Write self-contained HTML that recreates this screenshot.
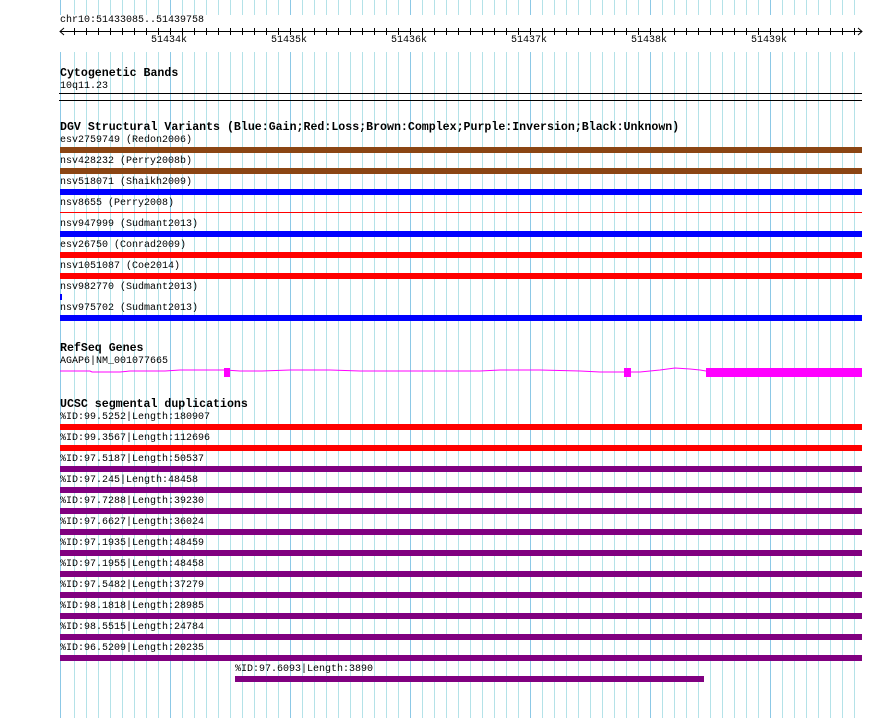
<!DOCTYPE html>
<html><head><style>
body{margin:0;width:890px;height:718px;background:#fff;position:relative;overflow:hidden;font-family:"Liberation Mono",monospace;}
.t{position:absolute;font-size:10px;line-height:11px;color:#000;white-space:nowrap;}
.h{position:absolute;font-size:11.6px;line-height:12px;font-weight:bold;color:#000;white-space:nowrap;}
.b{position:absolute;height:6px;left:60px;width:802px;}
</style></head><body>
<svg width="890" height="718" style="position:absolute;left:0;top:0">
<g id="grid"></g>
<line x1="60.5" y1="0" x2="60.5" y2="718" stroke="#9fd0ea"/>
<script>
</script>
</svg>
<svg width="890" height="718" style="position:absolute;left:0;top:0">
<g stroke="#b4e2e8" stroke-width="1">
<line x1="74.5" y1="0" x2="74.5" y2="718"/><line x1="86.5" y1="0" x2="86.5" y2="718"/><line x1="98.5" y1="0" x2="98.5" y2="718"/><line x1="110.5" y1="0" x2="110.5" y2="718"/><line x1="122.5" y1="0" x2="122.5" y2="718"/><line x1="134.5" y1="0" x2="134.5" y2="718"/><line x1="146.5" y1="0" x2="146.5" y2="718"/><line x1="158.5" y1="0" x2="158.5" y2="718"/>
<line x1="182.5" y1="0" x2="182.5" y2="718"/><line x1="194.5" y1="0" x2="194.5" y2="718"/><line x1="206.5" y1="0" x2="206.5" y2="718"/><line x1="218.5" y1="0" x2="218.5" y2="718"/><line x1="230.5" y1="0" x2="230.5" y2="718"/><line x1="242.5" y1="0" x2="242.5" y2="718"/><line x1="254.5" y1="0" x2="254.5" y2="718"/><line x1="266.5" y1="0" x2="266.5" y2="718"/><line x1="278.5" y1="0" x2="278.5" y2="718"/>
<line x1="302.5" y1="0" x2="302.5" y2="718"/><line x1="314.5" y1="0" x2="314.5" y2="718"/><line x1="326.5" y1="0" x2="326.5" y2="718"/><line x1="338.5" y1="0" x2="338.5" y2="718"/><line x1="350.5" y1="0" x2="350.5" y2="718"/><line x1="362.5" y1="0" x2="362.5" y2="718"/><line x1="374.5" y1="0" x2="374.5" y2="718"/><line x1="386.5" y1="0" x2="386.5" y2="718"/><line x1="398.5" y1="0" x2="398.5" y2="718"/>
<line x1="422.5" y1="0" x2="422.5" y2="718"/><line x1="434.5" y1="0" x2="434.5" y2="718"/><line x1="446.5" y1="0" x2="446.5" y2="718"/><line x1="458.5" y1="0" x2="458.5" y2="718"/><line x1="470.5" y1="0" x2="470.5" y2="718"/><line x1="482.5" y1="0" x2="482.5" y2="718"/><line x1="494.5" y1="0" x2="494.5" y2="718"/><line x1="506.5" y1="0" x2="506.5" y2="718"/><line x1="518.5" y1="0" x2="518.5" y2="718"/>
<line x1="542.5" y1="0" x2="542.5" y2="718"/><line x1="554.5" y1="0" x2="554.5" y2="718"/><line x1="566.5" y1="0" x2="566.5" y2="718"/><line x1="578.5" y1="0" x2="578.5" y2="718"/><line x1="590.5" y1="0" x2="590.5" y2="718"/><line x1="602.5" y1="0" x2="602.5" y2="718"/><line x1="614.5" y1="0" x2="614.5" y2="718"/><line x1="626.5" y1="0" x2="626.5" y2="718"/><line x1="638.5" y1="0" x2="638.5" y2="718"/>
<line x1="662.5" y1="0" x2="662.5" y2="718"/><line x1="674.5" y1="0" x2="674.5" y2="718"/><line x1="686.5" y1="0" x2="686.5" y2="718"/><line x1="698.5" y1="0" x2="698.5" y2="718"/><line x1="710.5" y1="0" x2="710.5" y2="718"/><line x1="722.5" y1="0" x2="722.5" y2="718"/><line x1="734.5" y1="0" x2="734.5" y2="718"/><line x1="746.5" y1="0" x2="746.5" y2="718"/><line x1="758.5" y1="0" x2="758.5" y2="718"/>
<line x1="782.5" y1="0" x2="782.5" y2="718"/><line x1="794.5" y1="0" x2="794.5" y2="718"/><line x1="806.5" y1="0" x2="806.5" y2="718"/><line x1="818.5" y1="0" x2="818.5" y2="718"/><line x1="830.5" y1="0" x2="830.5" y2="718"/><line x1="842.5" y1="0" x2="842.5" y2="718"/><line x1="854.5" y1="0" x2="854.5" y2="718"/>
</g>
<g stroke="#8cc8e6" stroke-width="1">
<line x1="60.5" y1="0" x2="60.5" y2="718"/>
<line x1="170.5" y1="0" x2="170.5" y2="718"/><line x1="290.5" y1="0" x2="290.5" y2="718"/><line x1="410.5" y1="0" x2="410.5" y2="718"/><line x1="530.5" y1="0" x2="530.5" y2="718"/><line x1="650.5" y1="0" x2="650.5" y2="718"/><line x1="770.5" y1="0" x2="770.5" y2="718"/>
</g>
<rect x="0" y="15" width="890" height="37" fill="#fff"/>
<rect x="0" y="62" width="890" height="35" fill="#fff" opacity="0"/>
<!-- axis -->
<g stroke="#000" stroke-width="1">
<line x1="60" y1="31.5" x2="862" y2="31.5"/>
<path d="M64 28 L60 31.5 L64 35 M858 28 L862 31.5 L858 35" fill="none"/>
<line x1="74.5" y1="28" x2="74.5" y2="35"/><line x1="86.5" y1="28" x2="86.5" y2="35"/><line x1="98.5" y1="28" x2="98.5" y2="35"/><line x1="110.5" y1="28" x2="110.5" y2="35"/><line x1="122.5" y1="28" x2="122.5" y2="35"/><line x1="134.5" y1="28" x2="134.5" y2="35"/><line x1="146.5" y1="28" x2="146.5" y2="35"/><line x1="158.5" y1="28" x2="158.5" y2="35"/><line x1="170.5" y1="28" x2="170.5" y2="35"/>
<line x1="182.5" y1="28" x2="182.5" y2="35"/><line x1="194.5" y1="28" x2="194.5" y2="35"/><line x1="206.5" y1="28" x2="206.5" y2="35"/><line x1="218.5" y1="28" x2="218.5" y2="35"/><line x1="230.5" y1="28" x2="230.5" y2="35"/><line x1="242.5" y1="28" x2="242.5" y2="35"/><line x1="254.5" y1="28" x2="254.5" y2="35"/><line x1="266.5" y1="28" x2="266.5" y2="35"/><line x1="278.5" y1="28" x2="278.5" y2="35"/><line x1="290.5" y1="28" x2="290.5" y2="35"/>
<line x1="302.5" y1="28" x2="302.5" y2="35"/><line x1="314.5" y1="28" x2="314.5" y2="35"/><line x1="326.5" y1="28" x2="326.5" y2="35"/><line x1="338.5" y1="28" x2="338.5" y2="35"/><line x1="350.5" y1="28" x2="350.5" y2="35"/><line x1="362.5" y1="28" x2="362.5" y2="35"/><line x1="374.5" y1="28" x2="374.5" y2="35"/><line x1="386.5" y1="28" x2="386.5" y2="35"/><line x1="398.5" y1="28" x2="398.5" y2="35"/><line x1="410.5" y1="28" x2="410.5" y2="35"/>
<line x1="422.5" y1="28" x2="422.5" y2="35"/><line x1="434.5" y1="28" x2="434.5" y2="35"/><line x1="446.5" y1="28" x2="446.5" y2="35"/><line x1="458.5" y1="28" x2="458.5" y2="35"/><line x1="470.5" y1="28" x2="470.5" y2="35"/><line x1="482.5" y1="28" x2="482.5" y2="35"/><line x1="494.5" y1="28" x2="494.5" y2="35"/><line x1="506.5" y1="28" x2="506.5" y2="35"/><line x1="518.5" y1="28" x2="518.5" y2="35"/><line x1="530.5" y1="28" x2="530.5" y2="35"/>
<line x1="542.5" y1="28" x2="542.5" y2="35"/><line x1="554.5" y1="28" x2="554.5" y2="35"/><line x1="566.5" y1="28" x2="566.5" y2="35"/><line x1="578.5" y1="28" x2="578.5" y2="35"/><line x1="590.5" y1="28" x2="590.5" y2="35"/><line x1="602.5" y1="28" x2="602.5" y2="35"/><line x1="614.5" y1="28" x2="614.5" y2="35"/><line x1="626.5" y1="28" x2="626.5" y2="35"/><line x1="638.5" y1="28" x2="638.5" y2="35"/><line x1="650.5" y1="28" x2="650.5" y2="35"/>
<line x1="662.5" y1="28" x2="662.5" y2="35"/><line x1="674.5" y1="28" x2="674.5" y2="35"/><line x1="686.5" y1="28" x2="686.5" y2="35"/><line x1="698.5" y1="28" x2="698.5" y2="35"/><line x1="710.5" y1="28" x2="710.5" y2="35"/><line x1="722.5" y1="28" x2="722.5" y2="35"/><line x1="734.5" y1="28" x2="734.5" y2="35"/><line x1="746.5" y1="28" x2="746.5" y2="35"/><line x1="758.5" y1="28" x2="758.5" y2="35"/><line x1="770.5" y1="28" x2="770.5" y2="35"/>
<line x1="782.5" y1="28" x2="782.5" y2="35"/><line x1="794.5" y1="28" x2="794.5" y2="35"/><line x1="806.5" y1="28" x2="806.5" y2="35"/><line x1="818.5" y1="28" x2="818.5" y2="35"/><line x1="830.5" y1="28" x2="830.5" y2="35"/><line x1="842.5" y1="28" x2="842.5" y2="35"/><line x1="854.5" y1="28" x2="854.5" y2="35"/>
<line x1="59" y1="93.5" x2="862" y2="93.5"/>
<line x1="59" y1="100.5" x2="862" y2="100.5"/>
</g>
<!-- gene -->
<polyline points="60,371 90,371 92,372 120,372 130,371 165,371 180,370 225,370 240,371 262,371 290,370 330,370 360,371 380,371 410,371 480,371 500,370 540,370 580,371 600,372 625,372 640,372 650,371 660,370 675,368 690,369 700,370 706,371" fill="none" stroke="#f0f" stroke-width="1"/>
<rect x="224" y="368" width="6" height="9" fill="#f0f"/>
<rect x="624" y="368" width="7" height="9" fill="#f0f"/>
<rect x="706" y="368" width="156" height="9" fill="#f0f"/>
</svg>

<div class="t" style="left:60px;top:15px">chr10:51433085..51439758</div>
<div class="t" style="left:151px;top:35px">51434k</div>
<div class="t" style="left:271px;top:35px">51435k</div>
<div class="t" style="left:391px;top:35px">51436k</div>
<div class="t" style="left:511px;top:35px">51437k</div>
<div class="t" style="left:631px;top:35px">51438k</div>
<div class="t" style="left:751px;top:35px">51439k</div>

<div class="h" style="left:60px;top:68px">Cytogenetic Bands</div>
<div class="t" style="left:60px;top:81px">10q11.23</div>

<div class="h" style="left:60px;top:122px">DGV Structural Variants (Blue:Gain;Red:Loss;Brown:Complex;Purple:Inversion;Black:Unknown)</div>
<div class="t" style="left:60px;top:135px">esv2759749 (Redon2006)</div>
<div class="b" style="top:147px;background:#8b4513"></div>
<div class="t" style="left:60px;top:156px">nsv428232 (Perry2008b)</div>
<div class="b" style="top:168px;background:#8b4513"></div>
<div class="t" style="left:60px;top:177px">nsv518071 (Shaikh2009)</div>
<div class="b" style="top:189px;background:#00f"></div>
<div class="t" style="left:60px;top:198px">nsv8655 (Perry2008)</div>
<div class="b" style="top:212px;height:1px;background:#f00"></div>
<div class="t" style="left:60px;top:219px">nsv947999 (Sudmant2013)</div>
<div class="b" style="top:231px;background:#00f"></div>
<div class="t" style="left:60px;top:240px">esv26750 (Conrad2009)</div>
<div class="b" style="top:252px;background:#f00"></div>
<div class="t" style="left:60px;top:261px">nsv1051087 (Coe2014)</div>
<div class="b" style="top:273px;background:#f00"></div>
<div class="t" style="left:60px;top:282px">nsv982770 (Sudmant2013)</div>
<div class="b" style="top:294px;width:2px;background:#00f"></div>
<div class="t" style="left:60px;top:303px">nsv975702 (Sudmant2013)</div>
<div class="b" style="top:315px;background:#00f"></div>

<div class="h" style="left:60px;top:343px">RefSeq Genes</div>
<div class="t" style="left:60px;top:356px">AGAP6|NM_001077665</div>

<div class="h" style="left:60px;top:399px">UCSC segmental duplications</div>
<div class="t" style="left:60px;top:412px">%ID:99.5252|Length:180907</div>
<div class="b" style="top:424px;background:#f00"></div>
<div class="t" style="left:60px;top:433px">%ID:99.3567|Length:112696</div>
<div class="b" style="top:445px;background:#f00"></div>
<div class="t" style="left:60px;top:454px">%ID:97.5187|Length:50537</div>
<div class="b" style="top:466px;background:#800080"></div>
<div class="t" style="left:60px;top:475px">%ID:97.245|Length:48458</div>
<div class="b" style="top:487px;background:#800080"></div>
<div class="t" style="left:60px;top:496px">%ID:97.7288|Length:39230</div>
<div class="b" style="top:508px;background:#800080"></div>
<div class="t" style="left:60px;top:517px">%ID:97.6627|Length:36024</div>
<div class="b" style="top:529px;background:#800080"></div>
<div class="t" style="left:60px;top:538px">%ID:97.1935|Length:48459</div>
<div class="b" style="top:550px;background:#800080"></div>
<div class="t" style="left:60px;top:559px">%ID:97.1955|Length:48458</div>
<div class="b" style="top:571px;background:#800080"></div>
<div class="t" style="left:60px;top:580px">%ID:97.5482|Length:37279</div>
<div class="b" style="top:592px;background:#800080"></div>
<div class="t" style="left:60px;top:601px">%ID:98.1818|Length:28985</div>
<div class="b" style="top:613px;background:#800080"></div>
<div class="t" style="left:60px;top:622px">%ID:98.5515|Length:24784</div>
<div class="b" style="top:634px;background:#800080"></div>
<div class="t" style="left:60px;top:643px">%ID:96.5209|Length:20235</div>
<div class="b" style="top:655px;background:#800080"></div>
<div class="t" style="left:235px;top:664px">%ID:97.6093|Length:3890</div>
<div class="b" style="top:676px;left:235px;width:469px;background:#800080"></div>
</body></html>
